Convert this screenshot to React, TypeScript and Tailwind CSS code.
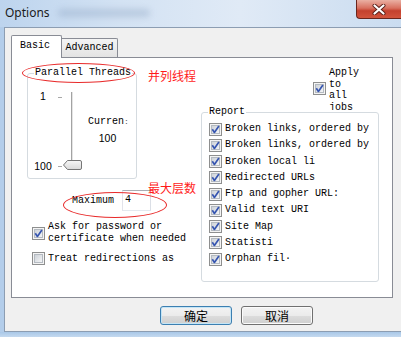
import React, { useId } from "react";

const mono = "font-['Liberation_Mono','DejaVu_Sans_Mono',monospace] text-[10px] text-black";
const cjk = "font-['Noto_Sans_CJK_SC','Noto_Sans',sans-serif]";

function Check({ checked }: { checked?: boolean }) {
  const id = "g" + useId().replace(/[^a-zA-Z0-9]/g, "");
  return (
    <svg width="13" height="13" viewBox="0 0 13 13" className="block shrink-0">
      <defs>
        <linearGradient id={id} x1="0" y1="0" x2="1" y2="1">
          <stop offset="0" stopColor="#cbd0d6" />
          <stop offset="1" stopColor="#f6f7f8" />
        </linearGradient>
      </defs>
      <rect x="0.5" y="0.5" width="12" height="12" fill="#f4f4f4" stroke="#8e8f8f" />
      <rect x="2.5" y="2.5" width="8" height="8" fill={`url(#${id})`} stroke="#b4bac1" />
      {checked && (
        <path d="M3.3 6.3 L5.4 9.4 L9.9 3.1" fill="none" stroke="#3655b0" strokeWidth="1.7" strokeLinejoin="round" />
      )}
    </svg>
  );
}

function Slider() {
  return (
    <svg width="30" height="84" viewBox="0 0 30 84" className="block shrink-0">
      <defs>
        <linearGradient id="thumbg" x1="0" y1="0" x2="0" y2="1">
          <stop offset="0" stopColor="#f7f7f7" />
          <stop offset="1" stopColor="#d9d9d9" />
        </linearGradient>
      </defs>
      <line x1="3" y1="9.5" x2="7" y2="9.5" stroke="#a8a8a8" />
      <line x1="3" y1="78.5" x2="7" y2="78.5" stroke="#a8a8a8" />
      <line x1="16.5" y1="4" x2="16.5" y2="75" stroke="#a3a3a3" />
      <line x1="17.5" y1="4" x2="17.5" y2="75" stroke="#e4e4e4" />
      <path
        d="M8.5 77 L12.5 72.5 H25 Q26.5 72.5 26.5 74 V80 Q26.5 81.5 25 81.5 H12.5 Z"
        fill="url(#thumbg)"
        stroke="#767676"
      />
    </svg>
  );
}

function Btn({ label, def }: { label: string; def?: boolean }) {
  return (
    <div
      className={`w-[72px] h-[19px] rounded-[3px] border flex items-center justify-center text-[12px] leading-[14px] text-black ${cjk} ${
        def
          ? "border-[#3c7fb1] shadow-[inset_0_0_0_1px_#c4e5f6]"
          : "border-[#707070] shadow-[inset_0_0_0_1px_#fbfbfb]"
      } bg-[linear-gradient(#f3f3f3_0%,#ebebeb_50%,#dddddd_50%,#cfcfcf_100%)]`}
    >
      {label}
    </div>
  );
}

const reportItems = [
  "Broken links, ordered by",
  "Broken links, ordered by",
  "Broken local li",
  "Redirected URLs",
  "Ftp and gopher URL:",
  "Valid text URI",
  "Site Map",
  "Statisti",
  "Orphan fil\u00b7",
];

export default function App() {
  return (
    <div className="relative w-[401px] h-[337px] overflow-hidden bg-[#b8d0eb]">
      {/* Title bar */}
      <div className="h-[27px] flex items-start bg-[linear-gradient(90deg,#bdd4ee_0%,#d3e2f3_30%,#e0eaf6_60%,#cadcf0_100%)]">
        <div className="pl-[5px] pt-[5px] text-[12px] leading-[16px] text-[#1a1a1a] font-['Noto_Sans','Open_Sans',sans-serif]">
          Options
        </div>
        <div className="ml-[8px] mt-[9px] w-[92px] h-[8px] rounded-full bg-[#8fa6c4]/40 blur-[3px]" />
        <div className="ml-auto w-[45px] h-[19px] rounded-bl-[4px] border-l border-b border-[#6a261d] bg-[linear-gradient(#eab0a3_0%,#d8705f_45%,#c4412e_60%,#d2543c_100%)] flex items-center justify-center">
          <svg width="14" height="11" viewBox="0 0 14 11">
            <path d="M2.5 1.5 L11.5 9.5 M11.5 1.5 L2.5 9.5" stroke="#5a1f18" strokeWidth="4" strokeLinecap="round" />
            <path d="M2.5 1.5 L11.5 9.5 M11.5 1.5 L2.5 9.5" stroke="#ffffff" strokeWidth="2.2" strokeLinecap="round" />
          </svg>
        </div>
      </div>

      {/* Middle */}
      <div className="h-[305px] flex">
        <div className="w-[4px] bg-[#b3cdea]" />
        <div className="flex-1 border-l border-t border-b border-[#8c9db2] bg-[#f0f0f0] flex flex-col">
          {/* Tabs */}
          <div className={`mt-[7px] ml-[6px] h-[22px] flex items-end ${mono}`}>
            <div className="relative z-10 w-[51px] h-[23px] -mb-[1px] bg-white border-t border-l border-r border-[#898c95] rounded-t-[2px] pl-[8px] pt-[4px] leading-[12px]">
              Basic
            </div>
            <div className="w-[56px] h-[19px] border-t border-r border-[#898c95] rounded-tr-[2px] bg-[linear-gradient(#f4f4f4,#e3e3e3)] flex items-center justify-center leading-[12px]">
              Advanced
            </div>
          </div>

          {/* Panel */}
          <div className={`ml-[6px] w-[382px] h-[241px] bg-white border border-[#898c95] flex ${mono}`}>
            {/* Left column */}
            <div className="w-[189px] flex flex-col">
              <div className="ml-[15px] mt-[15px] w-[110px] h-[106px] border border-[#d5dbe0] rounded-[3px] relative flex items-start">
                <div className="absolute -top-[7px] left-[6px] bg-white px-[1px] leading-[12px]">
                  Parallel Threads
                </div>
                <div className="ml-[5px] mt-[16px] w-[20px] h-[82px] flex flex-col justify-between items-center font-['Liberation_Sans',sans-serif] text-[10.5px] leading-[12px]">
                  <span>1</span>
                  <span>100</span>
                </div>
                <div className="ml-[2px] mt-[14px]">
                  <Slider />
                </div>
                <div className="ml-[3px] mt-[40px] w-[41px] leading-[16px]">
                  <div className="whitespace-nowrap">
                    Curren<span className="text-[8px] text-[#555]">:</span>
                  </div>
                  <div className="text-center pr-[2px] font-['Liberation_Sans',sans-serif] text-[10.5px]">100</div>
                </div>
              </div>

              <div className="mt-[11px] ml-[60px] flex items-center">
                <span className="leading-[12px]">Maximum</span>
                <div className="ml-[8px] w-[29px] h-[21px] bg-white border border-t-[#abadb3] border-l-[#e2e3ea] border-r-[#dbdfe6] border-b-[#e3e9ef] pl-[2px] pt-[3px] leading-[12px]">
                  4
                </div>
              </div>

              <div className="mt-[10px] ml-[20px] flex items-center gap-[3px]">
                <Check checked />
                <div className="leading-[12px] whitespace-nowrap">
                  Ask for password or
                  <br />
                  certificate when needed
                </div>
              </div>

              <div className="mt-[7px] ml-[20px] h-[13px] flex items-center gap-[3px]">
                <Check />
                <div className="leading-[12px] whitespace-nowrap">Treat redirections as</div>
              </div>
            </div>

            {/* Right column */}
            <div className="flex-1 flex flex-col">
              <div className="mt-[9px] ml-[112px] h-[43px] overflow-hidden flex items-center gap-[3px]">
                <Check checked />
                <div className="self-start leading-[11.5px]">
                  Apply
                  <br />
                  to
                  <br />
                  all
                  <br />
                  jobs
                </div>
              </div>
              <div className="mt-[2px] w-[178px] h-[170px] border border-[#d5dbe0] rounded-[3px] relative pt-[8px] pl-[7px]">
                <div className="absolute -top-[7px] left-[6px] bg-white px-[1px] leading-[12px]">Report</div>
                {reportItems.map((t, i) => (
                  <div key={i} className="h-[16.25px] flex items-center gap-[3px]">
                    <Check checked />
                    <span className="leading-[12px] whitespace-nowrap">{t}</span>
                  </div>
                ))}
              </div>
            </div>
          </div>

          {/* Buttons */}
          <div className="mt-[8px] ml-[155px] flex gap-[9px]">
            <Btn label="确定" def />
            <Btn label="取消" />
          </div>
        </div>
      </div>

      {/* Bottom frame */}
      <div className="h-[5px] bg-[linear-gradient(#a9c8e8,#c4d9ef)]" />

      {/* Red annotations */}
      <div className="absolute left-[22px] top-[63px] w-[113px] h-[20px] rounded-[50%] border border-[#e82a2a]" />
      <div className={`absolute left-[148px] top-[68px] text-[12px] leading-[16px] text-[#ff1a1a] ${cjk}`}>并列线程</div>
      <div className="absolute left-[63px] top-[192px] w-[104px] h-[26px] rounded-[50%] border border-[#e82a2a]" />
      <div className={`absolute left-[148px] top-[180px] text-[12px] leading-[16px] text-[#ff1a1a] ${cjk}`}>最大层数</div>
    </div>
  );
}
